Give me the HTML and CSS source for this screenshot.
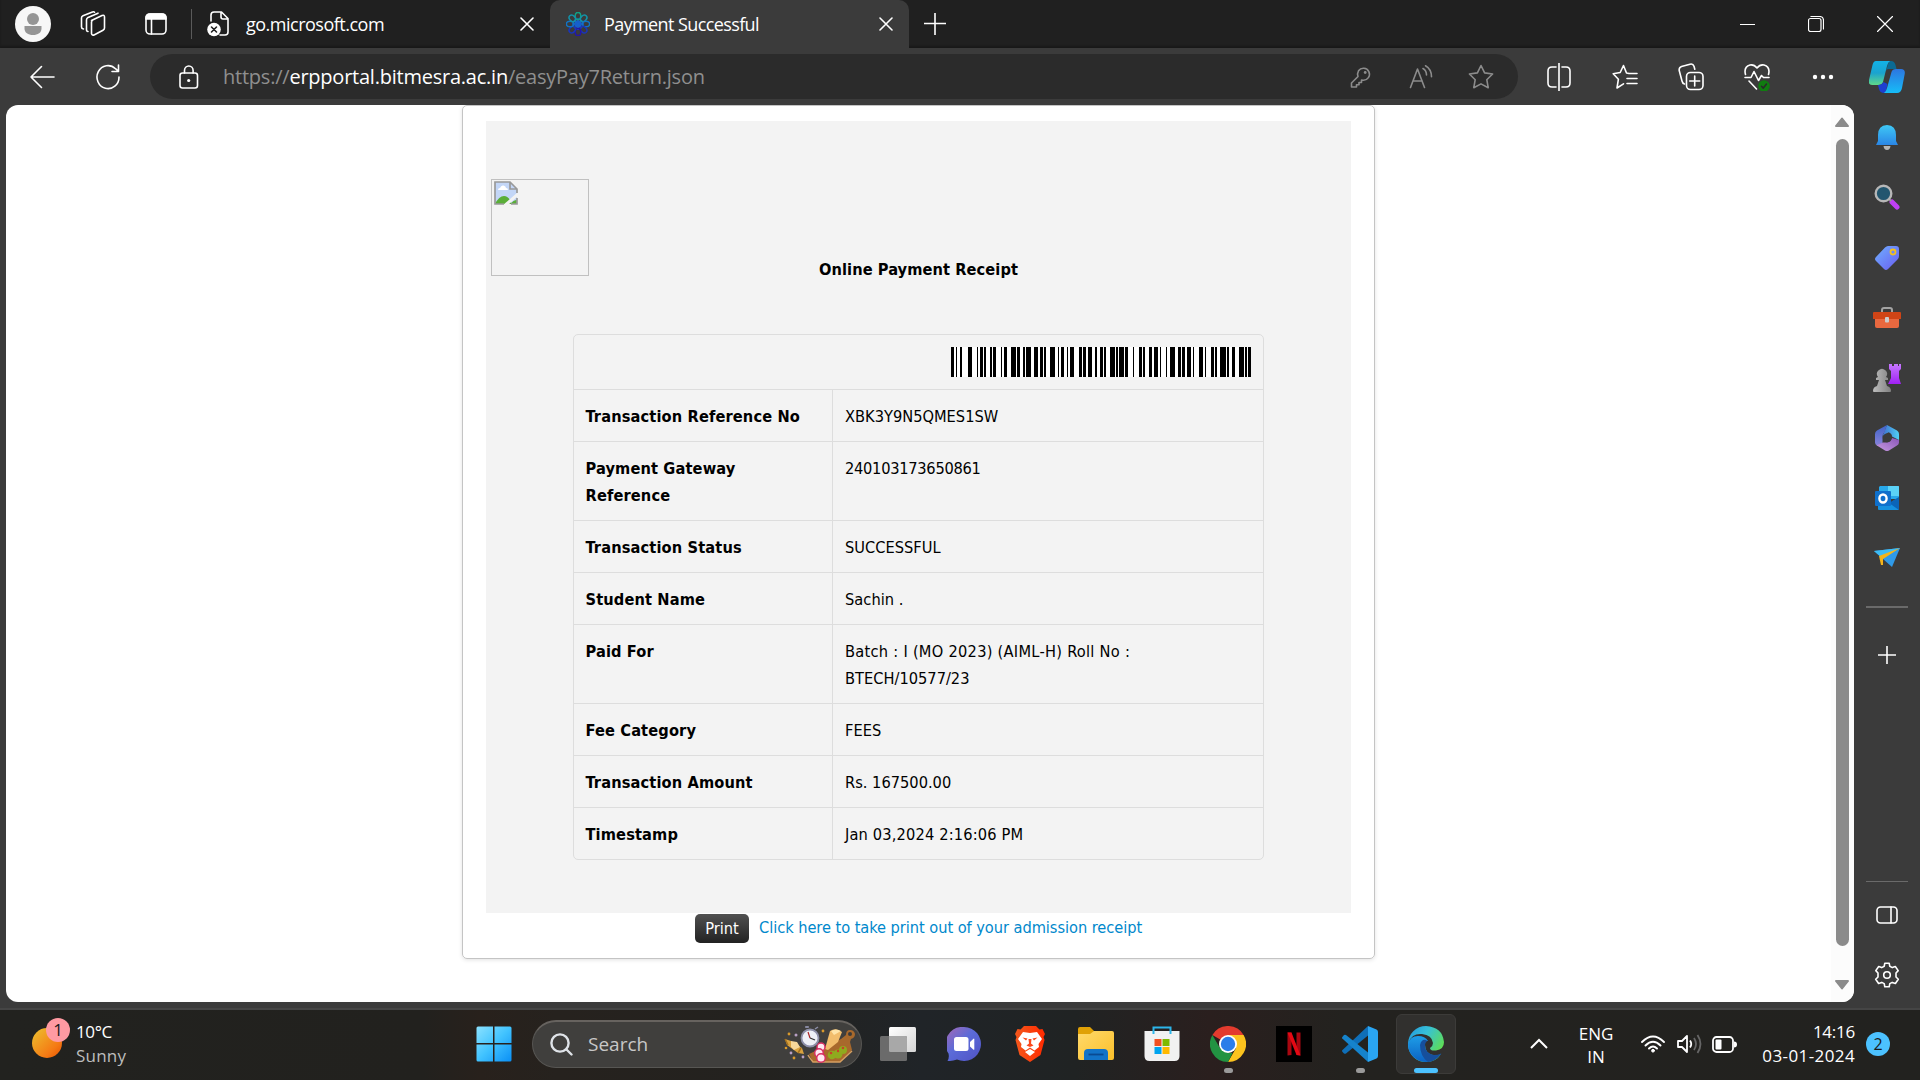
FILE: index.html
```html
<!DOCTYPE html>
<html lang="en">
<head>
<meta charset="utf-8">
<title>Payment Successful</title>
<link rel="stylesheet" href="styles.css">
</head>
<body>
<svg class="defs" width="0" height="0" aria-hidden="true">
  <defs>
    <linearGradient id="blueV" x1="0" y1="0" x2="0" y2="1"><stop offset="0" stop-color="#3fc8f5"/><stop offset="1" stop-color="#2a86e6"/></linearGradient>
    <linearGradient id="tagG" x1="0" y1="0" x2="1" y2="1"><stop offset="0" stop-color="#6fb0ff"/><stop offset="1" stop-color="#6a5cf0"/></linearGradient>
    <linearGradient id="purple" x1="0" y1="0" x2="0" y2="1"><stop offset="0" stop-color="#c678ff"/><stop offset="1" stop-color="#a020f5"/></linearGradient>
    <linearGradient id="grey" x1="0" y1="0" x2="1" y2="0"><stop offset="0" stop-color="#bdbdbd"/><stop offset="1" stop-color="#808080"/></linearGradient>
    <linearGradient id="sun" x1="0" y1="0" x2="1" y2="1"><stop offset="0" stop-color="#ecc22f"/><stop offset=".7" stop-color="#f57a14"/><stop offset="1" stop-color="#e65100"/></linearGradient>
    <linearGradient id="win" x1="0" y1="0" x2="1" y2="1"><stop offset="0" stop-color="#8be2ff"/><stop offset=".5" stop-color="#41c3ff"/><stop offset="1" stop-color="#0a8ff5"/></linearGradient>
    <linearGradient id="chat" x1="0" y1="0" x2="1" y2="1"><stop offset="0" stop-color="#a569b5"/><stop offset=".45" stop-color="#5b6bd8"/><stop offset="1" stop-color="#5052c4"/></linearGradient>
    <linearGradient id="brave" x1="0" y1="0" x2="1" y2="0"><stop offset="0" stop-color="#f4581c"/><stop offset="1" stop-color="#ff2a00"/></linearGradient>
    <linearGradient id="folder" x1="0" y1="0" x2="1" y2="1"><stop offset="0" stop-color="#ffd96b"/><stop offset="1" stop-color="#fbc02a"/></linearGradient>
    <linearGradient id="edgeTop" x1="0" y1="0" x2="1" y2=".6"><stop offset="0" stop-color="#2196dc"/><stop offset=".45" stop-color="#36c0d8"/><stop offset="1" stop-color="#62e04a"/></linearGradient>
    <linearGradient id="edgeL" x1="0" y1="0" x2="0" y2="1"><stop offset="0" stop-color="#1e9de6"/><stop offset="1" stop-color="#0b62c4"/></linearGradient>
    <linearGradient id="cpL" x1="0" y1="0" x2="0" y2="1"><stop offset="0" stop-color="#12b3e8"/><stop offset=".5" stop-color="#1ba3cf"/><stop offset="1" stop-color="#5fd98a"/></linearGradient>
    <linearGradient id="cpR" x1="0" y1="0" x2="0" y2="1"><stop offset="0" stop-color="#2d76e0"/><stop offset="1" stop-color="#16bdf8"/></linearGradient>
    <linearGradient id="tv" x1="0" y1="0" x2="1" y2="1"><stop offset="0" stop-color="#fff"/><stop offset="1" stop-color="#d5d5d5"/></linearGradient>
    <linearGradient id="mA" x1="0" y1="0" x2="1" y2="0"><stop offset="0" stop-color="#3f6fd0"/><stop offset="1" stop-color="#4fd0f5"/></linearGradient>
    <linearGradient id="mB" x1="0" y1="0" x2="0" y2="1"><stop offset="0" stop-color="#3f63c8"/><stop offset="1" stop-color="#8f86dc"/></linearGradient>
    <linearGradient id="mC" x1="0" y1="1" x2="1" y2="0"><stop offset="0" stop-color="#c79be0"/><stop offset="1" stop-color="#8a55b8"/></linearGradient>
  </defs>
</svg>

<header class="titlebar">
  <svg class="avatar" width="36" height="36" viewBox="0 0 36 36"><circle cx="18" cy="18" r="18" fill="#f7f7f7"/><circle cx="18" cy="13" r="6" fill="#959595"/><path d="M9.500 20h17v2.500c0 4.200-3.600 6.500-8.500 6.500s-8.500-2.300-8.500-6.500z" fill="#959595"/></svg>
  <svg class="ic workspaces" width="26" height="26" viewBox="0 0 26 26"><path d="M11.500 9.500 22 4.500q2.500-1 2.500 1.500v11q0 1.500-1.500 2.200l-8.500 4.500q-2.500 1.300-3-1V11q0-1 .8-1.500zM8 20.500q-1.500 0-1.500-2V9q0-1.500 1-2.200L18 2.200M3.500 18q-2-.3-2-2V7Q1.500 5.500 3 4.800L12.500 1q1.500-.4 2 .2"/></svg>
  <svg class="ic tabact" width="22" height="22" viewBox="0 0 22 22"><rect x="1" y="1" width="20" height="20" rx="4"/><path d="M1 6V5q0-4 4-4h12q4 0 4 4v1z" fill="#fff"/><path d="M6.500 6v15"/></svg>
  <i class="tab-divider"></i>
  <div class="tab">
    <svg class="ic" width="24" height="26" viewBox="0 0 24 26"><path d="M4 10V4q0-3 3-3h7.500L21 7.500V21q0 3-3 3h-5M14 1.500V6q0 2 2 2h5"/><circle cx="7" cy="18.500" r="6.800" fill="#fff" stroke="none"/><path d="m4.500 16 5 5m0-5-5 5" stroke="#222"/></svg>
    <span class="tab-title t1">go.microsoft.com</span>
    <svg class="ic close" width="14" height="14" viewBox="0 0 14 14"><path d="m1 1 12 12m0-12L1 13"/></svg>
  </div>
  <div class="tab active">
    <svg class="favicon" width="24" height="24" viewBox="-12 -12 24 24"><g fill="none" stroke-width="1.500"><circle r="3" stroke="#1660cc"/><path stroke="#1660cc" d="M0-6V6M-6 0H6M-4-4l8 8M4-4l-8 8"/><ellipse cy="-8" rx="2.800" ry="3.600" stroke="#11a083"/><ellipse cy="-8" rx="2.800" ry="3.600" stroke="#1391a8" transform="rotate(45)"/><ellipse cy="-8" rx="2.800" ry="3.600" stroke="#1273c4" transform="rotate(90)"/><ellipse cy="-8" rx="2.800" ry="3.600" stroke="#1a35b8" transform="rotate(135)"/><ellipse cy="-8" rx="2.800" ry="3.600" stroke="#2416a8" transform="rotate(180)"/><ellipse cy="-8" rx="2.800" ry="3.600" stroke="#1a35b8" transform="rotate(225)"/><ellipse cy="-8" rx="2.800" ry="3.600" stroke="#1273c4" transform="rotate(270)"/><ellipse cy="-8" rx="2.800" ry="3.600" stroke="#1391a8" transform="rotate(315)"/></g></svg>
    <span class="tab-title t2">Payment Successful</span>
    <svg class="ic close" width="14" height="14" viewBox="0 0 14 14"><path d="m1 1 12 12m0-12L1 13"/></svg>
  </div>
  <svg class="ic newtab" width="22" height="22" viewBox="0 0 22 22"><path d="M11 0v22M0 10.500h22"/></svg>
  <div class="winctl">
    <svg class="ic thin" width="15" height="16" viewBox="0 0 15 16"><path d="M0 8.500h15"/></svg>
    <svg class="ic thin" width="16" height="16" viewBox="0 0 16 16"><rect x=".5" y="2.500" width="12.500" height="13" rx="2"/><path d="M3 .5h8.500q4 0 4 4V13"/></svg>
    <svg class="ic thin" width="16" height="16" viewBox="0 0 16 16"><path d="m.5.500 15 15m0-15-15 15"/></svg>
  </div>
</header>

<nav class="toolbar">
  <svg class="ic back" width="26" height="24" viewBox="0 0 26 24"><path d="M25 12H2M12.500 1.500 2 12l10.500 10.500"/></svg>
  <svg class="ic reload" width="26" height="26" viewBox="0 0 26 26"><path d="M24 13a11 11.500 0 1 1-3.500-8.300L23 7M23.500 1v6.500H17"/></svg>
  <div class="address">
    <svg class="ic lock" width="20" height="24" viewBox="0 0 20 24"><rect x="1" y="8" width="17.500" height="15" rx="2.500"/><path d="M5.500 8V5.500a4.300 4.500 0 0 1 8.600 0V8"/><circle cx="9.700" cy="15.500" r="1.600" fill="#fff" stroke="none"/></svg>
    <span class="url">https://<b>erpportal.bitmesra.ac.in</b>/easyPay7Return.json</span>
    <div class="addr-actions">
      <svg class="ic dim" width="22" height="22" viewBox="0 0 22 22"><path d="M8 10.500Q7 7.500 8.500 4.800a6 6 0 1 1 4.500 9.400L11.500 14v2.500H9v2.300H6.500V21H1.500v-4z"/><circle cx="15.200" cy="6.500" r="1.400" fill="#8c8c8c" stroke="none"/></svg>
      <svg class="ic dim" width="24" height="24" viewBox="0 0 24 24"><path d="M1.500 22.500 8.500 4l7 18.500M4 16h9.200M14 3.500q3.500 2 3.500 6.500M16.500.8q6 3.500 6 11"/></svg>
      <svg class="ic dim" width="26" height="26" viewBox="0 0 26 26"><path d="m13 1.500 3.600 7.400 8 1.100-5.800 5.700 1.400 8L13 19.900l-7.200 3.800 1.400-8L1.400 10l8-1.100z"/></svg>
    </div>
  </div>
  <div class="tools">
    <svg class="ic" width="24" height="28" viewBox="0 0 24 28"><path d="M9 4H5Q1 4 1 8v12q0 4 4 4h4M15 4h4q4 0 4 4v12q0 4-4 4h-4M12 0v28"/></svg>
    <svg class="ic" width="26" height="26" viewBox="0 0 26 26"><path d="M17 9.500 14.500 9 11.500 1.500 8.200 8.500 1.200 9.700l5.200 5.500L5 24l6.500-4.200M16.500 9.500H25M15 14.500h10M15 19.500h10"/></svg>
    <svg class="ic" width="26" height="28" viewBox="0 0 26 28"><rect x="8.500" y="9.500" width="16.500" height="17" rx="4"/><path d="M16.700 13v10M11.700 18h10M6.500 21Q4.500 20.500 4 18L1.200 7.500Q.8 4.500 3.500 3.500L12 1.200q3-.8 4 2l.8 3"/></svg>
    <svg class="ic" width="26" height="28" viewBox="0 0 26 28"><path d="M1.500 11.500Q-.5 4 6 2q4-.8 7 3 3-3.800 7-3 6.500 2 4.500 9.500M1 14.500h6l3-6 4.500 9 3-5 2 2H25M5 18l7.500 8"/><circle cx="20" cy="23" r="5.800" fill="#107c10" stroke="none"/><path d="m17.500 23.300 1.800 1.800 3.200-4" stroke="#2a2a2a"/></svg>
    <svg width="22" height="6" viewBox="0 0 22 6"><g fill="#fff"><circle cx="3" cy="3" r="2.200"/><circle cx="11" cy="3" r="2.200"/><circle cx="19" cy="3" r="2.200"/></g></svg>
    <svg class="copilot" width="36" height="32" viewBox="0 0 36 32"><path d="M20 0h2q3.500 0 4.500 4l1 4H19q-1 0-2 2z" fill="#0b6a94"/><path d="M7 0h14q-2 1-3 5l-4 16q-1 3-5 3H3q-4 0-3-5L3.500 4Q4.500 0 7 0z" fill="url(#cpL)"/><path d="M9 24q4 0 5.500-3l4 2-2 9H15q-4 0-5-4z" fill="#1d3fd0"/><path d="M15 32q2-1 3-5l4.500-16q.8-3 4.500-3h5q4.500 0 3.700 5L33 27q-1 5-5 5z" fill="url(#cpR)"/></svg>
  </div>
</nav>

<div class="workspace">
  <main class="page">
    <div class="viewport">
      <section class="card">
        <div class="receipt">
          <div class="logo"><svg width="24" height="24" viewBox="0 0 24 24"><path d="M1 1h15l7 7v15H1z" fill="#c3d6f7"/><path d="M4 9q0-2 2-2 1-3 3.500-2.500Q12 5 12 7q2 0 2 2z" fill="#fff"/><path d="M1 23q4-8 9-8 5 0 8 8z" fill="#5aae38"/><path d="M24 11v4L14 24h-5z" fill="#f3f3f3"/><path d="M17 23q2-4 6-4v4z" fill="#5aae38"/><path d="M10 23H1V1h15l7 7v4M16 1v7h7M17 23h6v-6" fill="none" stroke="#999" stroke-width="1.700"/></svg></div>
          <h1>Online Payment Receipt</h1>
          <table class="details">
            <colgroup><col class="c1"><col></colgroup>
            <tr class="code"><td colspan="2"><svg class="barcode" width="300" height="30" viewBox="0 0 300 30" shape-rendering="crispEdges"><path fill="#fff" d="M0 0h300v30H0z"/><path fill="none" stroke="#000" stroke-width="30" stroke-dasharray="3 2 1 3 2 6 4 5 1 2 3 1 2 4 2 1 3 5 1 2 3 4 5 1 3 3 2 1 5 3 4 2 3 1 2 4 5 3 1 2 3 3 1 2 4 5 3 1 3 2 4 3 2 3 3 1 2 4 5 1 2 1 5 1 3 5 1 5 3 1 2 4 3 2 4 2 1 5 1 3 5 3 3 1 3 2 4 2 1 5 4 2 1 5 3 1 2 3 6 1 2 3 3 4 5 1 2 1 3 0" d="M0 15h300"/></svg></td></tr>
            <tr><th>Transaction Reference No</th><td><span class="caps">XBK3Y9N5QMES1SW</span></td></tr>
            <tr><th>Payment Gateway<br>Reference</th><td><span class="digits">240103173650861</span></td></tr>
            <tr><th>Transaction Status</th><td><span class="caps">SUCCESSFUL</span></td></tr>
            <tr><th>Student Name</th><td>Sachin .</td></tr>
            <tr><th>Paid For</th><td><span class="batch">Batch : I (MO 2023) (AIML-H) Roll No :</span><br><span class="caps">BTECH/10577/23</span></td></tr>
            <tr><th>Fee Category</th><td>FEES</td></tr>
            <tr><th>Transaction Amount</th><td><span class="caps">Rs. 167500.00</span></td></tr>
            <tr><th>Timestamp</th><td><span class="stamp">Jan 03,2024 2:16:06 PM</span></td></tr>
          </table>
        </div>
        <div class="print-row"><span class="print">Print</span><a class="print-link">Click here to take print out of your admission receipt</a></div>
      </section>
    </div>
    <div class="scrollbar">
      <svg width="16" height="10" viewBox="0 0 16 10"><path d="M8 1.500 14 9H2z" fill="#8b8b8b" stroke="#8b8b8b" stroke-width="2" stroke-linejoin="round"/></svg>
      <i class="thumb"></i>
      <svg width="16" height="10" viewBox="0 0 16 10"><path d="M8 8.500 14 1H2z" fill="#8b8b8b" stroke="#8b8b8b" stroke-width="2" stroke-linejoin="round"/></svg>
    </div>
  </main>
  <aside class="sidebar">
    <div class="cell"><svg width="24" height="26" viewBox="0 0 24 26"><path d="M8.500 21h7q-.5 4-3.500 4t-3.500-4z" fill="#b5b5b5"/><path d="M12 0q9 .5 9 10v6l2 4H1l2-4v-6Q3 .5 12 0z" fill="url(#blueV)"/></svg></div>
    <div class="cell lens"><svg width="28" height="26" viewBox="0 0 28 26"><path d="m19 18 5 5" stroke="#c040f5" stroke-width="5" stroke-linecap="round"/><path d="m15 14 3 3" stroke="#999" stroke-width="2"/><circle cx="10.500" cy="9.500" r="7.800" fill="#22566f" stroke="#b7b7b7" stroke-width="2.400"/></svg></div>
    <div class="cell"><svg width="26" height="26" viewBox="0 0 26 26"><path d="M14 1h8q3 0 3 3v7q0 2-1.500 3.500L14 24q-2 2-4 0l-8-8q-2-2 0-4L11 2.500Q12.500 1 14 1z" fill="url(#tagG)"/><circle cx="19" cy="7" r="2.500" fill="none" stroke="#f4c01f" stroke-width="1.800"/></svg></div>
    <div class="cell"><svg width="28" height="22" viewBox="0 0 28 22"><path d="M9 6V3q0-2 2-2h6q2 0 2 2v3" fill="none" stroke="#a3a3a3" stroke-width="2"/><path d="M2 10h24v9q0 2-2 2H4q-2 0-2-2z" fill="#e8683f"/><path d="M0 6q0-1 1-1h26q1 0 1 1v6H0z" fill="#cf4416"/><rect x="12" y="10" width="4" height="5.500" rx="1" fill="#ccc"/></svg></div>
    <div class="cell"><svg width="28" height="28" viewBox="0 0 28 28"><path d="M16 0h3v2h2V0h4v2h1V0h2v5l-2 2v7l2 6H15l3-6V7l-2-2z" fill="url(#purple)"/><path d="M0 27q0-4 4-5l2-6H3v-2l2-1a5 5 0 1 1 8 0l2 1v2h-3l2 6q4 1 4 5 0 1-1 1H1q-1 0-1-1z" fill="url(#grey)"/></svg></div>
    <div class="cell"><svg width="26" height="28" viewBox="0 0 26 28"><path d="m13 1 10 5.500q2 1 2 3.500v6l-7-3.500q0-3-3.500-4.200L8.500 12z" fill="url(#mA)"/><path d="M13 1 3 6.500Q1 7.500 1 10v8.500q0 2 2 3l5.500 2V12q0-2 2-4z" fill="url(#mB)"/><path d="M2.500 21.300 9 18.500l4 0q4-.5 5-4.500l7 2v2.500q0 2-2 3L15 26.600q-2 1-4 0z" fill="url(#mC)"/><circle cx="13.200" cy="13.800" r="4.400" fill="#3b3b3b"/></svg></div>
    <div class="cell"><svg width="26" height="26" viewBox="0 0 26 26"><path d="M6 1h18q1 0 1 1v12H5V2z" fill="#28a8ea"/><path d="M14 1h10q1 0 1 1v9H14z" fill="#5bd2f7"/><path d="M4 12 16 18l9-6v12q0 1-1 1H5q-1 0-1-1z" fill="#1490df"/><path d="m25 12-10 6 10 7z" fill="#0a64b8"/><rect x="1" y="6" width="16" height="15" rx="1" fill="#0f70cc"/><ellipse cx="9" cy="13.500" rx="3.600" ry="4" fill="none" stroke="#fff" stroke-width="2.400"/></svg></div>
    <div class="cell"><svg width="26" height="20" viewBox="0 0 26 20"><path d="M0 3 26 0 18 19z" fill="#2f9ae8"/><path d="M0 3 26 0 7 9z" fill="#3dbcf5"/><path d="M5 8 26 0 9 11v6H7z" fill="#f4b41a"/></svg></div>
    <i class="rule thick"></i>
    <svg class="ic plus" width="18" height="18" viewBox="0 0 18 18"><path d="M9 0v18M0 9h18"/></svg>
    <i class="rule bottom"></i>
    <svg class="ic panel" width="22" height="18" viewBox="0 0 22 18"><rect x="1" y="1" width="20" height="16" rx="3.500"/><path d="M15 1v16"/></svg>
    <svg class="ic gear" width="26" height="26" viewBox="0 0 26 26"><path d="m10.800 1.200-.6 3.100-2.500 1.300-3-1.100-2.900 4.100L4 11v4l-2.300 2.300 2.900 4.200 3.200-1.100 2.400 1.200.6 3.200h4.400l.6-3.200 2.400-1.200 3.200 1.100 2.900-4.200L22 15v-4l2.200-2.400-2.900-4.100-3 1.100-2.500-1.300-.6-3.100z"/><circle cx="13" cy="13" r="3.300"/></svg>
  </aside>
</div>

<footer class="taskbar">
  <div class="weather">
    <svg width="38" height="40" viewBox="0 0 38 40"><circle cx="15" cy="25" r="15" fill="url(#sun)"/><circle cx="26" cy="12" r="12" fill="#ff9aa2"/><text x="26" y="17.500" text-anchor="middle" class="badge-text">1</text></svg>
    <div class="weather-text"><span>10°C</span><span class="soft">Sunny</span></div>
  </div>
  <svg class="start" width="36" height="36" viewBox="0 0 36 36"><path fill="url(#win)" d="M2 .5h15V17H.5V2Q.5.500 2 .5zM18.500.500H34q1.500 0 1.500 1.500v15h-17zM.5 18.500H17v17H2q-1.500 0-1.500-1.500zM18.500 18.500h17V34q0 1.500-1.500 1.500H18.500z"/></svg>
  <div class="search">
    <svg width="23" height="23" viewBox="0 0 23 23" fill="none" stroke="#dfe3e8" stroke-width="2.400" stroke-linecap="round"><circle cx="10" cy="10" r="8.600"/><path d="m16.500 16.500 5 5"/></svg>
    <span>Search</span>
    <svg class="food" width="72" height="38" viewBox="0 0 72 38"><path d="M25 28 57 13l5-4q0-5 4-5t5 4q0 4-4 5l-1 3 2 8-12 12H29z" fill="#a8692c"/><path d="M24 29q1 2 5 7h27l12-11" fill="none" stroke="#d6a062" stroke-width="1.500"/><circle cx="66" cy="8" r="2" fill="#3a3a39"/><path d="M46 5q6-4 12 1l-4 10-10 8-3-1z" fill="#f2bd6c"/><path d="M47 5q5-3 10 0l-7 4z" fill="#ffe4a8"/><g fill="#ffe9f0" stroke="#d82e62" stroke-width="1.500"><circle cx="37" cy="21" r="4"/><circle cx="35" cy="27" r="4.300"/><circle cx="37" cy="32" r="4.300"/></g><g fill="#8faa1e"><circle cx="48" cy="29" r="4.300"/><circle cx="54" cy="28" r="4.500"/><circle cx="59" cy="24" r="4"/></g><g fill="#c8402a"><circle cx="47" cy="27" r="1.300"/><circle cx="59" cy="22" r="1.300"/><circle cx="54" cy="25" r="1.200"/></g><path d="m1 13 6 2 11 7 2 6-6-1-11-8z" fill="#d9a23f"/><path d="m7 15 6 1 3 5-6 3-3-3z" fill="#f7d89a"/><path d="m1 13 3 6m13 3-3 5" stroke="#a5721f" stroke-width="1.500"/><circle cx="26" cy="12" r="8.500" fill="#eef0f6" stroke="#8d8fa8" stroke-width="1.800"/><path d="m26 12-2-6" stroke="#a22" stroke-width="1.200"/><path d="m26 12 5 2" stroke="#333" stroke-width="1.200"/><path d="M23 2V0m-2 1h4m6 2 3-2" stroke="#8d8fa8" stroke-width="1.500"/><g fill="#b9a0c4"><circle cx="12" cy="9" r="1.500"/><circle cx="7" cy="27" r="1.400"/><circle cx="19" cy="31" r="1.400"/></g><g fill="#d9992b"><circle cx="5" cy="8" r="1.400"/><circle cx="39" cy="5" r="1.400"/><circle cx="2" cy="22" r="1.300"/><circle cx="10" cy="32" r="1.400"/></g></svg>
  </div>
  <div class="apps">
    <div class="app"><svg width="36" height="34" viewBox="0 0 36 34"><rect x="9" width="27" height="25" rx="1.500" fill="url(#tv)"/><rect y="9" width="27" height="25" rx="1.500" fill="#6b6b6b"/><path d="M9 9h16.500q1.500 0 1.500 1.500V25H10.500Q9 25 9 23.500z" fill="#a8a8a8"/></svg></div>
    <div class="app"><svg width="34" height="34" viewBox="0 0 34 34"><path d="M17 0a17 17 0 1 1-7 32.500Q5 34.500.5 33.800q2-3 1-7.300A17 17 0 0 1 17 0z" fill="url(#chat)"/><rect x="7" y="10" width="14.500" height="14" rx="2.500" fill="#fff"/><path d="m23 15 3.500-3.300q.8-.5.800.500v10q0 1-.8.500L23 19.500z" fill="#fff"/></svg></div>
    <div class="app"><svg width="32" height="36" viewBox="0 0 32 36"><path d="m10 0h12l3.500 3.500L28.500 3 31 8l-1.500 3 1 3-4 15L16 36 5.500 29l-4-15 1-3L1 8l2.500-5 3 .5z" fill="url(#brave)"/><path d="m9 6 7 1 7-1 5 7-3.500 5 .5 3-4.500 3.500L16 21.500 11.500 24.500 7 21l.5-3L4 13zm7 17 5 3-5 4-5-4z" fill="#fff"/><path d="m8.500 11.500 5 1-1.500 2zm15 0-5 1 1.500 2zM14.500 13h3l-.5 4.500 2.500 2L16 21l-3.500-1.500 2.500-2z" fill="#fb481c"/></svg></div>
    <div class="app"><svg width="36" height="34" viewBox="0 0 36 34"><path d="M0 2q0-2 2-2h10l4 4h18v8H0z" fill="#e0a106"/><path d="M0 7h12l4-3h18q2 0 2 2v25q0 2-2 2H2q-2 0-2-2z" fill="url(#folder)"/><path d="M6 33v-7q0-4 4-4h16q4 0 4 4v7z" fill="#1273c8"/><path d="M10.500 27.500h15" stroke="#0a4a92" stroke-width="1.800"/></svg></div>
    <div class="app"><svg width="36" height="36" viewBox="0 0 36 36"><path d="M.5 5h35v25q0 5-5 5h-25q-5 0-5-5z" fill="#f1f1f1"/><path d="M9.500 8V1.500h17V8" fill="none" stroke="#2cb5ea" stroke-width="2"/><path d="M10.500 13h7v7h-7z" fill="#f25022"/><path d="M18.500 13h7v7h-7z" fill="#7fba00"/><path d="M10.500 21h7v7h-7z" fill="#00a4ef"/><path d="M18.500 21h7v7h-7z" fill="#ffb900"/></svg></div>
    <div class="app"><svg width="36" height="36" viewBox="0 0 36 36"><path d="M18 18 2.400 9A18 18 0 0 1 33.600 9z" fill="#e33b2e"/><path d="M18 9h15.600A18 18 0 0 1 18 36l7.800-13.500z" fill="#fcc31e"/><path d="M2.400 9 10.200 22.500 18 27h4.500L18 36A18 18 0 0 1 2.400 9z" fill="#229342"/><circle cx="18" cy="18" r="9" fill="#fff"/><circle cx="18" cy="18" r="7.200" fill="#2b7de9"/></svg><i class="dot"></i></div>
    <div class="app"><svg width="36" height="36" viewBox="0 0 36 36"><path d="M0 0h36v36H0z"/><path d="M11.500 6.500h4V29l-4 .5zM20.500 6.500h4v23l-4-.5z" fill="#a80710"/><path d="M11.500 6.500h4l9 23-4-.5z" fill="#e50914"/></svg></div>
    <div class="app"><svg width="36" height="36" viewBox="0 0 36 36"><path d="M0 24.500 26 0v9.500L4 27.500q-1 .5-2 0L.3 25.700z" fill="#0f6fb8"/><path d="M0 11.500 2 9q1-.7 2 0l22 17.500V36L.3 12.500z" fill="#1583cc"/><path d="M26 0 34.500 3.500Q36 4.200 36 6v24q0 1.800-1.500 2.500L26 36z" fill="#2aa5f2"/></svg><i class="dot"></i></div>
    <div class="app current"><svg width="36" height="36" viewBox="0 0 36 36"><path d="M18 0A18 18 0 0 0 0 18v2A18 18 0 0 0 18 36q10 0 15-8-2 1.500-7 1.500Q17 28 17 19q0-6-6-7Q5 12 1 16 4 7 14 8q10 1 11 9 0 3-3 5 0 3 6 2.500Q36 23.500 36 16 34.500 1 18 0z" fill="url(#edgeTop)"/><path d="M0 18q2-8 10-8 7 0 10 5-6-1-7 6 0 9 10 14.200Q20 36 18 36A18 18 0 0 1 0 18z" fill="url(#edgeL)"/><path d="M12 19q0-3 3-5 3-1 4 1-2 2-2 4 0 8 9 10 4 0 7-1.500.5 0 0 .8Q27 36 20 36 12 30 12 19z" fill="#164f9c"/></svg><i class="dot wide"></i></div>
  </div>
  <div class="tray">
    <svg class="chev" width="18" height="11" viewBox="0 0 18 11" fill="none" stroke="#fff" stroke-width="2"><path d="m1 10 8-8 8 8"/></svg>
    <div class="lang"><span>ENG</span><span>IN</span></div>
    <svg class="wifi" width="24" height="18" viewBox="0 0 24 18" fill="none" stroke="#fff" stroke-width="1.900" stroke-linecap="round"><path d="M1 7q11-11 22 0M4.500 10.500q7.500-7.500 15 0M8 13.500q4-4 8 0"/><circle cx="12" cy="15.700" r="1.400" fill="#fff" stroke-width="1"/></svg>
    <svg class="vol" width="25" height="20" viewBox="0 0 25 20" fill="none" stroke="#fff" stroke-width="1.800" stroke-linejoin="round"><path d="M1 7h4l5-5v16l-5-5H1zM13 6.500q2.500 3.500 0 7"/><path d="M17 4q4 6 0 12M20.500 1q6 9 0 18" stroke="#666"/></svg>
    <svg class="bat" width="25" height="17" viewBox="0 0 25 17"><rect x="1" y="1" width="20" height="15" rx="3.500" fill="none" stroke="#fff" stroke-width="1.800"/><rect x="3.500" y="3.500" width="6" height="10" rx="1" fill="#fff"/><path d="M22 5.500q3 0 3 3t-3 3z" fill="#fff"/></svg>
    <div class="clock"><span class="time">14:16</span><span class="date">03-01-2024</span></div>
    <span class="notif">2</span>
  </div>
</footer>
</body>
</html>
```
FILE: styles.css
```css
* { box-sizing: border-box; }
body {
  margin: 0; width: 1920px; height: 1080px; overflow: hidden;
  display: flex; flex-direction: column;
  background: #3b3b3b; color: #fff;
  font-family: "Open Sans", "Noto Sans", sans-serif;
}
svg { display: block; flex: none; }
.defs { position: absolute; }
.ic { fill: none; stroke: #fff; stroke-width: 1.6; stroke-linejoin: round; stroke-linecap: round; }
.ic.thin { stroke-width: 1.2; }
.ic.dim { stroke: #8c8c8c; }

/* title bar */
.titlebar { height: 48px; flex: none; background: #202020; display: flex; align-items: center; box-shadow: inset 0 -2px 2px #191919; }
.avatar { margin-left: 15px; }
.workspaces { margin-left: 29px; }
.tabact { margin-left: 39px; }
.tab-divider { width: 1px; height: 30px; background: #5a5a5a; margin-left: 24px; }
.tab { height: 48px; display: flex; align-items: center; width: 358px; padding: 0 16px 0 15px; }
.tab-title { font-size: 18px; line-height: 24px; margin: -1px 0 0 15px; white-space: nowrap; }
.tab .close { margin-left: auto; }
.tab.active { background: #3b3b3b; width: 359px; border-radius: 10px 10px 0 0; padding: 0 16px; }
.tab.active .tab-title { margin-left: 14px; }
.t1 { letter-spacing: -.5px; }
.t2 { letter-spacing: -.6px; }
.newtab { margin-left: 15px; }
.winctl { margin-left: auto; display: flex; gap: 53px; padding-right: 27px; }

/* toolbar */
.toolbar { height: 57px; flex: none; display: flex; align-items: center; }
.back { margin-left: 29px; }
.reload { margin-left: 40px; }
.address { margin-left: 29px; width: 1368px; height: 45px; border-radius: 23px; background: #2b2b2b; display: flex; align-items: center; padding-left: 29px; }
.url { margin-left: 24px; font-size: 20px; line-height: 28px; letter-spacing: -.23px; color: #8f8f8f; white-space: nowrap; }
.url b { font-weight: 400; color: #fff; }
.addr-actions { margin-left: auto; display: grid; grid-template-columns: repeat(3, 60px); justify-items: center; align-items: center; margin-right: 7px; }
.tools { margin-left: 8px; display: grid; grid-template-columns: repeat(5, 66px) 62px; justify-items: center; align-items: center; }

/* workspace */
.workspace { height: 905px; flex: none; display: flex; padding-bottom: 6px; border-bottom: 2px solid #454545; }
.page { margin-left: 6px; width: 1848px; background: #fff; border-radius: 12px; overflow: hidden; display: flex; }
.viewport { width: 1825px; padding-left: 456px; }
.card { width: 913px; height: 854px; border: 1px solid #c4c4c4; border-radius: 5px; box-shadow: 0 1px 4px rgba(0,0,0,.12); padding: 15px 23px 0; color: #000; font-family: "DejaVu Sans Condensed", "DejaVu Sans", sans-serif; font-stretch: condensed; font-size: 16.25px; line-height: 27px; }
.receipt { width: 865px; height: 792px; background: #f3f3f3; padding: 58px 5px 0; }
.logo { width: 98px; height: 97px; border: 1px solid #c0c0c0; padding: 1px 2px; }
.receipt h1 { margin: -20px 0 0; font-size: 16.25px; line-height: 27px; text-align: center; letter-spacing: .08px; }
.details { margin: 51px 0 0 82px; width: 691px; border: 1px solid #ddd; border-radius: 5px; border-spacing: 0; table-layout: fixed; }
.c1 { width: 258px; }
.details th, .details td { vertical-align: top; text-align: left; padding: 13px 12px 11px 11.5px; border-top: 1px solid #ddd; white-space: nowrap; line-height: 27px; height: 52px; }
.details td { border-left: 1px solid #ddd; padding-left: 12px; letter-spacing: .05px; }
.details th { font-weight: 700; letter-spacing: .13px; }
.details .code td { border: 0; padding: 12px; height: 54px; }
.details .digits { letter-spacing: -.26px; }
.details .caps { letter-spacing: .01px; }
.details .batch { letter-spacing: .27px; }
.details .stamp { letter-spacing: .16px; }
.barcode { margin-left: auto; }
.print-row { display: flex; align-items: center; height: 30px; padding-left: 209px; }
.print { width: 54px; height: 29px; border-radius: 5px; background: linear-gradient(#505050, #222); color: #fff; text-align: center; line-height: 29px; }
.print-link { color: #0088cc; margin: -2px 0 0 10px; white-space: nowrap; letter-spacing: -.05px; }

.scrollbar { width: 23px; background: #fcfcfc; display: flex; flex-direction: column; align-items: center; padding: 12px 1px 0 0; }
.thumb { width: 13px; height: 807px; border-radius: 7px; background: #8b8b8b; margin: 12px 0 34px; }

.sidebar { width: 66px; display: flex; flex-direction: column; align-items: center; padding-top: 3px; }
.cell { height: 60px; width: 66px; display: grid; place-items: center; flex: none; }
.cell.lens { padding: 0 1px 3px 0; }
.rule { width: 42px; height: 1px; background: #6a6a6a; flex: none; }
.rule.thick { height: 2px; margin-top: 18px; }
.plus { margin-top: 38px; }
.rule.bottom { margin-top: 217px; }
.panel { margin-top: 24px; }
.gear { margin-top: 38px; }

/* taskbar */
.taskbar { height: 70px; flex: none; display: flex; background: linear-gradient(90deg, #22221f 0, #22211e 22%, #28211c 25%, #26221e 29%, #23221f 40%, #202428 48%, #202323 56%, #2a1f1e 63%, #23221f 70%, #22221f 100%); }
.weather { display: flex; margin-left: 32px; width: 200px; }
.weather > svg { margin-top: 8px; }
.badge-text { font-size: 17px; fill: #1a1a1a; }
.weather-text { display: flex; flex-direction: column; margin: 10px 0 0 6px; font-size: 17px; line-height: 24px; letter-spacing: -.4px; }
.soft { color: #bdbdbd; letter-spacing: .2px; }
.start { margin: 16px 0 0 244px; }
.search { margin: 10px 0 0 20px; width: 330px; height: 48px; border-radius: 24px; background: #403f3d; border: 1px solid #575653; border-top: 2px solid #67635f; display: flex; align-items: center; padding-left: 17px; }
.search span { font-size: 19px; color: #c8c8c8; margin: -1px 0 0 15px; width: 196px; }
.apps { display: grid; grid-template-columns: repeat(9, 66px); margin-left: 3px; }
.app { position: relative; height: 60px; margin: 4px 3px 0; display: grid; place-items: center; }
.app.current { background: #31302e; border: 1px solid #3c3b39; border-radius: 6px; }
.dot { position: absolute; left: 26px; bottom: 1px; width: 9px; height: 5px; border-radius: 3px; background: #9a9a9a; }
.dot.wide { left: 17px; bottom: 0; width: 24px; background: #4cc2ff; }
.tray { display: flex; align-items: flex-start; margin-left: 71px; font-size: 17px; line-height: 24px; }
.chev { margin-top: 28px; }
.lang { margin: 12px 0 0 30px; width: 36px; display: flex; flex-direction: column; align-items: center; line-height: 23px; }
.wifi { margin: 25px 0 0 27px; }
.vol { margin: 24px 0 0 12px; }
.bat { margin: 26px 0 0 10px; }
.clock { margin: 10px 0 0 18px; width: 100px; display: flex; flex-direction: column; align-items: flex-end; white-space: nowrap; }
.time { letter-spacing: -.25px; }
.date { letter-spacing: .4px; }
.notif { margin: 22px 0 0 11px; width: 24px; height: 24px; border-radius: 12px; background: #4cc2ff; color: #1a1a1a; text-align: center; font-size: 16px; }
```
